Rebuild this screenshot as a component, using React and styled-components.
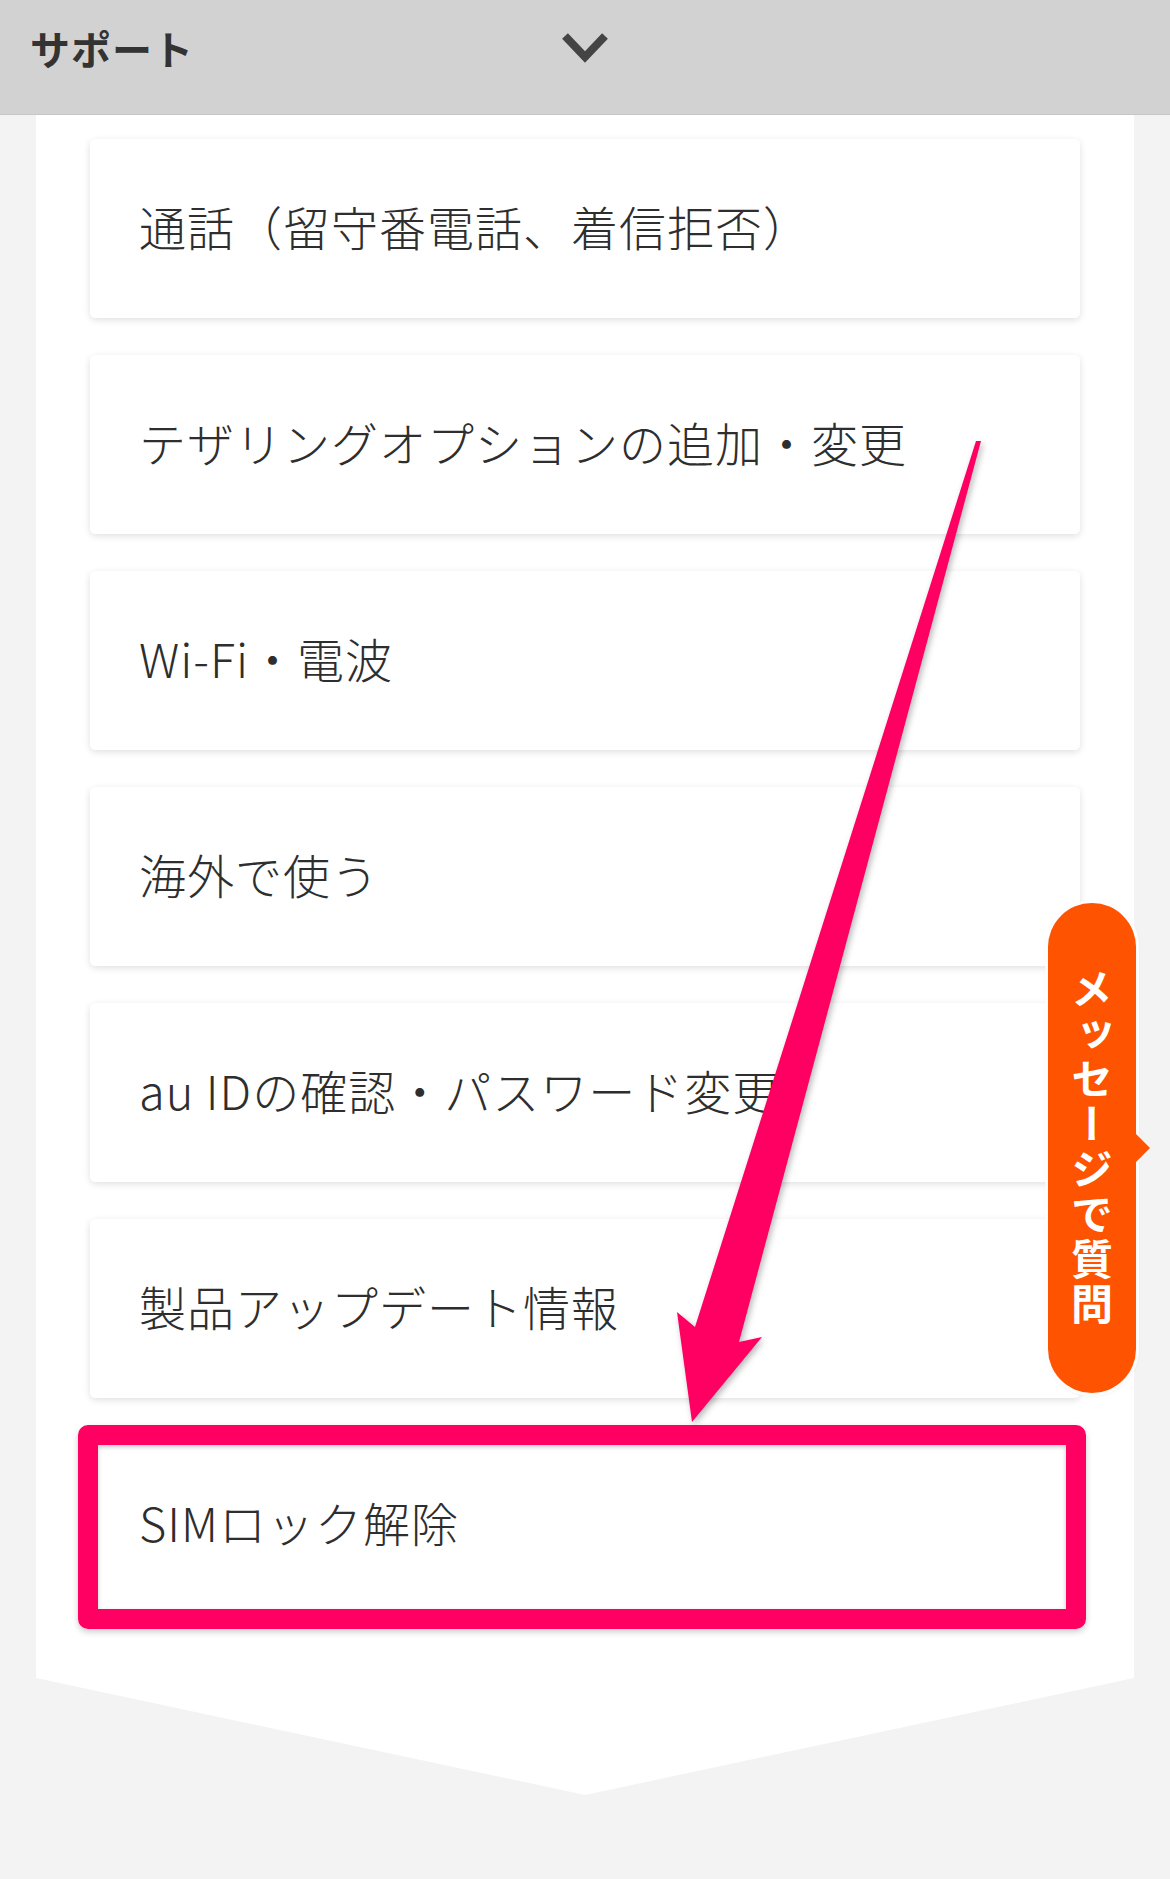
import React from 'react';
import styled, { createGlobalStyle } from 'styled-components';

const GlobalStyle = createGlobalStyle`
  html, body {
    margin: 0;
    padding: 0;
    background: #f3f3f3;
  }
  body {
    font-family: "Noto Sans CJK JP", "Noto Sans", sans-serif;
  }
`;

const Page = styled.div`
  position: relative;
  width: 1170px;
  min-height: 1879px;
  background: #f3f3f3;
  overflow: hidden;
`;

const Header = styled.header`
  box-sizing: border-box;
  height: 115px;
  padding: 0 30px 18px;
  background: #d2d2d2;
  border-bottom: 1px solid #c6c6c6;
  display: grid;
  grid-template-columns: 1fr auto 1fr;
  align-items: center;
`;

const Title = styled.h1`
  margin: 0;
  font-size: 40px;
  font-weight: 700;
  letter-spacing: 1px;
  color: #333;
`;

const Chevron = styled.svg`
  width: 48px;
  height: 30px;
  display: block;
`;

const Panel = styled.section`
  margin: 0 36px;
  padding: 24px 54px 181px;
  background: #fff;
  display: flex;
  flex-direction: column;
  gap: 37px;
  clip-path: polygon(0 0, 100% 0, 100% calc(100% - 117px), 50% 100%, 0 calc(100% - 117px));
`;

const Card = styled.a`
  position: relative;
  box-sizing: border-box;
  height: 179px;
  padding: 0 0 6px 49px;
  display: flex;
  align-items: center;
  background: #fff;
  border-radius: 5px;
  box-shadow: 0 2px 7px rgba(0, 0, 0, 0.13);
  font-size: 47px;
  font-weight: 300;
  letter-spacing: 1px;
  color: #2e2e2e;
  text-decoration: none;
`;

const Highlight = styled.span`
  position: absolute;
  top: -10px;
  left: -12px;
  right: -6px;
  bottom: -15px;
  border: 20px solid #ff0062;
  border-radius: 10px;
  box-shadow: 0 3px 6px rgba(0, 0, 0, 0.2), inset 0 2px 4px rgba(0, 0, 0, 0.22);
  pointer-events: none;
`;

const Arrow = styled.svg`
  position: absolute;
  top: 0;
  left: 0;
  width: 1170px;
  height: 1879px;
  pointer-events: none;
  filter: drop-shadow(2px 3px 3px rgba(0, 0, 0, 0.28));
`;

const Bubble = styled.button`
  position: absolute;
  top: 903px;
  left: 1048px;
  width: 88px;
  height: 490px;
  padding: 0;
  border: none;
  border-radius: 44px;
  background: #fe5300;
  box-shadow: 0 0 0 3px rgba(255, 255, 255, 0.85), 0 1px 5px rgba(0, 0, 0, 0.2);
  display: flex;
  align-items: center;
  justify-content: center;
  font-family: inherit;

  &::after {
    content: '';
    position: absolute;
    top: 230px;
    right: -14px;
    border-left: 15px solid #fe5300;
    border-top: 15px solid transparent;
    border-bottom: 15px solid transparent;
  }
`;

const BubbleText = styled.span`
  writing-mode: vertical-rl;
  text-orientation: upright;
  font-size: 42px;
  font-weight: 700;
  letter-spacing: 3px;
  color: #fff;
`;

const items = [
  '通話（留守番電話、着信拒否）',
  'テザリングオプションの追加・変更',
  'Wi-Fi・電波',
  '海外で使う',
  'au IDの確認・パスワード変更',
  '製品アップデート情報',
  'SIMロック解除',
];

const App = () => {
  return (
    <Page>
      <GlobalStyle />
      <Header>
        <Title>サポート</Title>
        <Chevron viewBox="0 0 48 30">
          <polyline points="4,3 24,24 44,3" fill="none" stroke="#444" strokeWidth="8" />
        </Chevron>
        <span />
      </Header>
      <Panel>
        {items.map((label, i) => (
          <Card key={label}>
            {label}
            {i === items.length - 1 && <Highlight />}
          </Card>
        ))}
      </Panel>
      <Arrow viewBox="0 0 1170 1879">
        <polygon
          points="976,441 981,441 739,1342 762,1337 692,1422 677,1312 695,1327"
          fill="#ff0062"
        />
      </Arrow>
      <Bubble>
        <BubbleText>メッセージで質問</BubbleText>
      </Bubble>
    </Page>
  );
};

export default App;
